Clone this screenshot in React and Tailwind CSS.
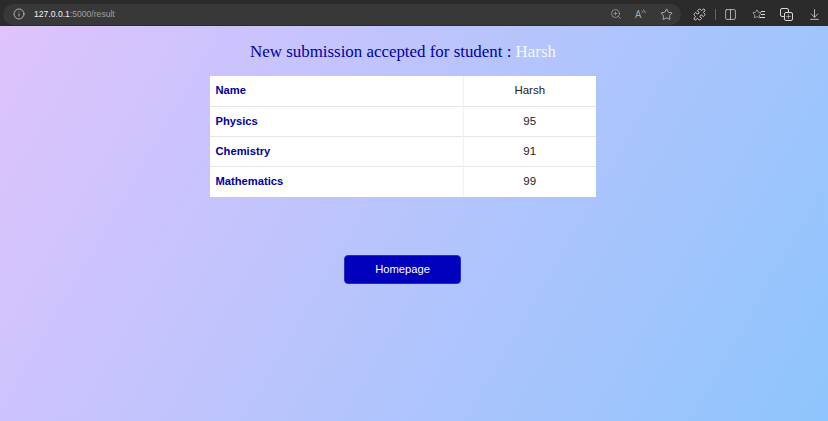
import { Info, ZoomIn, Star, Puzzle, Columns2, Plus, ArrowDownToLine } from "lucide-react";

const rows = [
  ["Name", "Harsh"],
  ["Physics", "95"],
  ["Chemistry", "91"],
  ["Mathematics", "99"],
];

function BrowserBar() {
  return (
    <div className="flex h-[26px] items-center bg-[#2b2b2b] pt-[2px]">
      <div className="ml-[3px] flex h-[21px] w-[678px] shrink-0 items-center rounded-full bg-[#383838] pl-[10px] pr-[8px]">
        <Info size={12} strokeWidth={1.5} className="text-[#d8d8d8]" />
        <span className="ml-[9px] font-['Liberation_Sans',sans-serif] text-[8.6px] font-medium text-[#f0f0f0]">
          127.0.0.1<span className="font-normal text-[#a0a0a0]">:5000/result</span>
        </span>
        <div className="ml-auto flex items-center text-[#a8a8a8]">
          <ZoomIn size={12} strokeWidth={1.4} />
          <div className="ml-[13px] flex w-[13px] items-start text-[10px] leading-none">
            A
            <svg width="5" height="7" viewBox="0 0 5 7" fill="none" stroke="currentColor" strokeWidth="0.8">
              <path d="M0.5 1.5c1 .6 1.5 1.4 1.5 2.3M2 0.5c1.3 .8 2.2 2 2.2 3.5" />
            </svg>
          </div>
          <Star size={13} strokeWidth={1.4} className="ml-[12px] text-[#d0d0d0]" />
        </div>
      </div>
      <div className="flex flex-1 items-center text-[#d8d8d8]">
        <Puzzle size={13} strokeWidth={1.7} className="ml-[12px] shrink-0" />
        <div className="ml-[9px] h-[11px] w-px shrink-0 bg-[#666666]" />
        <Columns2 size={13} strokeWidth={1.4} className="ml-[8px] shrink-0" />
        <div className="relative ml-[15px] h-[13px] w-[13px] shrink-0">
          <Star size={10} strokeWidth={1.5} className="absolute left-0 top-[1px]" />
          <div className="absolute right-0 top-[3px] h-px w-[4px] bg-[#d8d8d8]" />
          <div className="absolute right-0 top-[6px] h-px w-[4px] bg-[#d8d8d8]" />
          <div className="absolute right-0 top-[9px] h-px w-[5px] bg-[#d8d8d8]" />
        </div>
        <div className="relative ml-[15px] h-[13px] w-[13px] shrink-0">
          <div className="absolute left-0 top-0 h-[9px] w-[9px] rounded-[2px] border border-[#d8d8d8]" />
          <div className="absolute bottom-0 right-0 flex h-[9px] w-[9px] items-center justify-center rounded-[2px] border border-[#d8d8d8] bg-[#2b2b2b]">
            <Plus size={7} strokeWidth={2} />
          </div>
        </div>
        <ArrowDownToLine size={13} strokeWidth={1.5} className="ml-[15px] shrink-0" />
      </div>
    </div>
  );
}

export default function App() {
  return (
    <div className="flex h-[421px] w-[828px] flex-col overflow-hidden bg-[linear-gradient(120deg,#e0c3fc_0%,#8ec5fc_100%)]">
      <BrowserBar />
      <div className="flex w-[806px] flex-col items-center pt-[15px]">
        <h1 className="font-['Liberation_Serif',serif] text-[16.9px] leading-[21px] text-[#0000a8]">
          New submission accepted for student : <span className="text-[#f4f6ff]">Harsh</span>
        </h1>
        <table className="mt-[14px] w-[386px] table-fixed border-collapse bg-white font-['Liberation_Sans',sans-serif] text-[11.5px]">
          <tbody>
            {rows.map(([label, value]) => (
              <tr key={label} className="h-[30.25px] border-b border-[#e6e6e6] last:border-b-0 last:*:pb-[2px]">
                <th className="w-[253px] border-r border-[#f0f0f0] pl-[5.5px] text-left text-[11.2px] font-bold text-[#0000a0]">
                  {label}
                </th>
                <td className="text-center text-[#222222]">{value}</td>
              </tr>
            ))}
          </tbody>
        </table>
        <button className="mt-[58px] mr-[1px] h-[29px] w-[117px] rounded-[4px] border border-[#2a2ac8] bg-[#0000bd] font-['Liberation_Sans',sans-serif] text-[11.2px] text-white">
          Homepage
        </button>
      </div>
    </div>
  );
}
